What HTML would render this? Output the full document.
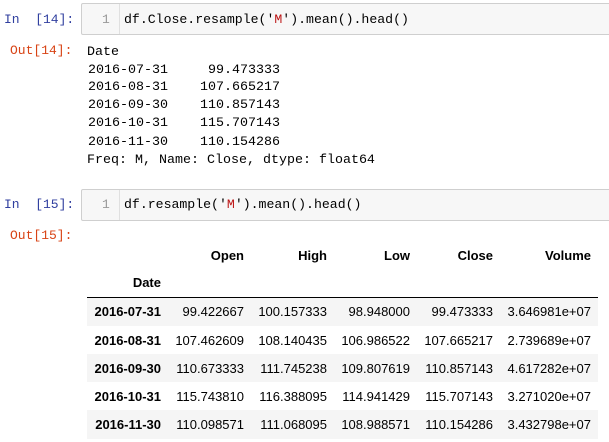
<!DOCTYPE html>
<html>
<head>
<meta charset="utf-8">
<style>
html,body{margin:0;padding:0;background:#fff;}
body{width:609px;height:442px;position:relative;overflow:hidden;}
div,span{position:absolute;white-space:pre;}
span.i{position:static;}
.m{font-family:"Liberation Mono",monospace;font-size:13px;line-height:18px;height:18px;color:#000;}
.o{font-size:13.33px;}
.in{color:#303F9F;left:4px;}
.out{color:#D84315;left:10px;}
.box{left:81px;width:532px;height:30px;background:#f7f7f7;border:1px solid #cfcfcf;border-radius:2px;box-sizing:content-box;}
.sep{left:119px;width:1px;height:30px;background:#e0e0e0;}
.num{color:#999;left:102px;}
.code{font-size:13.2px;left:124px;}
.r{color:#b11;}
.row{left:87px;width:511px;height:28px;}
.t{font-family:"Liberation Sans",Arial,sans-serif;font-size:13px;line-height:18px;height:18px;color:#000;text-align:right;width:90px;}
.b{font-weight:bold;}
</style>
</head>
<body>
<div class="m in" style="top:11px">In  [14]:</div>
<div class="box" style="top:3px"></div>
<div class="sep" style="top:4px"></div>
<div class="m num" style="top:11px">1</div>
<div class="m code" style="top:11px">df.Close.resample('<span class="i r">M</span>').mean().head()</div>

<div class="m out" style="top:42px">Out[14]:</div>
<div class="m o" style="left:87px;top:44px">Date</div>
<div class="m o" style="left:88px;top:62px">2016-07-31     99.473333</div>
<div class="m o" style="left:88px;top:79px">2016-08-31    107.665217</div>
<div class="m o" style="left:88px;top:97px">2016-09-30    110.857143</div>
<div class="m o" style="left:88px;top:115px">2016-10-31    115.707143</div>
<div class="m o" style="left:88px;top:134px">2016-11-30    110.154286</div>
<div class="m o" style="left:87px;top:152px">Freq: M, Name: Close, dtype: float64</div>

<div class="m in" style="top:196px">In  [15]:</div>
<div class="box" style="top:189px"></div>
<div class="sep" style="top:190px"></div>
<div class="m num" style="top:196px">1</div>
<div class="m code" style="top:196px">df.resample('<span class="i r">M</span>').mean().head()</div>

<div class="m out" style="top:227px">Out[15]:</div>

<div class="t b" style="left:154px;top:247px">Open</div>
<div class="t b" style="left:237px;top:247px">High</div>
<div class="t b" style="left:320px;top:247px">Low</div>
<div class="t b" style="left:403px;top:247px">Close</div>
<div class="t b" style="left:501px;top:247px">Volume</div>
<div class="t b" style="left:71px;top:274px">Date</div>
<div style="left:87px;top:297px;width:511px;height:1px;background:#000"></div>

<div class="row" style="top:298px;background:#f5f5f5"></div>
<div class="t b" style="left:71px;top:303px">2016-07-31</div>
<div class="t" style="left:154px;top:303px">99.422667</div>
<div class="t" style="left:237px;top:303px">100.157333</div>
<div class="t" style="left:320px;top:303px">98.948000</div>
<div class="t" style="left:403px;top:303px">99.473333</div>
<div class="t" style="left:501px;top:303px">3.646981e+07</div>

<div class="t b" style="left:71px;top:332px">2016-08-31</div>
<div class="t" style="left:154px;top:332px">107.462609</div>
<div class="t" style="left:237px;top:332px">108.140435</div>
<div class="t" style="left:320px;top:332px">106.986522</div>
<div class="t" style="left:403px;top:332px">107.665217</div>
<div class="t" style="left:501px;top:332px">2.739689e+07</div>

<div class="row" style="top:354px;background:#f5f5f5"></div>
<div class="t b" style="left:71px;top:360px">2016-09-30</div>
<div class="t" style="left:154px;top:360px">110.673333</div>
<div class="t" style="left:237px;top:360px">111.745238</div>
<div class="t" style="left:320px;top:360px">109.807619</div>
<div class="t" style="left:403px;top:360px">110.857143</div>
<div class="t" style="left:501px;top:360px">4.617282e+07</div>

<div class="t b" style="left:71px;top:388px">2016-10-31</div>
<div class="t" style="left:154px;top:388px">115.743810</div>
<div class="t" style="left:237px;top:388px">116.388095</div>
<div class="t" style="left:320px;top:388px">114.941429</div>
<div class="t" style="left:403px;top:388px">115.707143</div>
<div class="t" style="left:501px;top:388px">3.271020e+07</div>

<div class="row" style="top:410px;height:29px;background:#f5f5f5"></div>
<div class="t b" style="left:71px;top:416px">2016-11-30</div>
<div class="t" style="left:154px;top:416px">110.098571</div>
<div class="t" style="left:237px;top:416px">111.068095</div>
<div class="t" style="left:320px;top:416px">108.988571</div>
<div class="t" style="left:403px;top:416px">110.154286</div>
<div class="t" style="left:501px;top:416px">3.432798e+07</div>
</body>
</html>
